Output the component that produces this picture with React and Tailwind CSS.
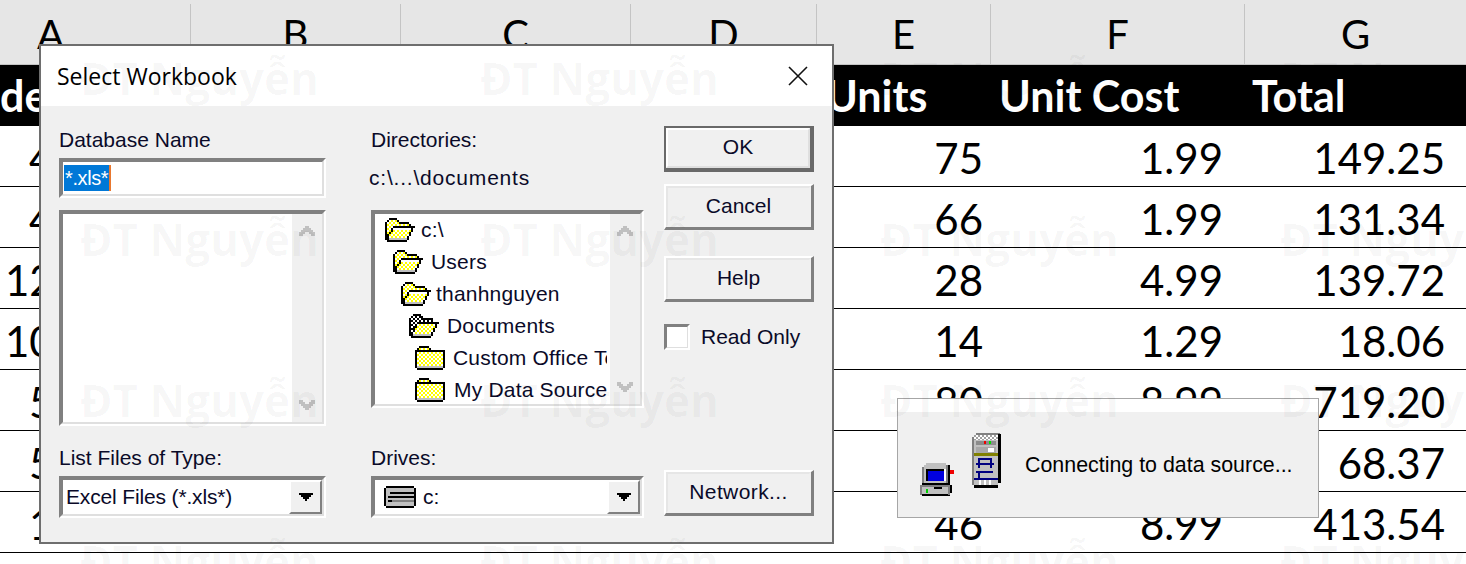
const columns = [
  { letter: "A", cls: "w-[190px] pl-[37px] text-left" },
  { letter: "B", cls: "w-[210px] border-l border-[#c4c4c4] text-center" },
  { letter: "C", cls: "w-[230px] border-l border-[#c4c4c4] text-center" },
  { letter: "D", cls: "w-[186px] border-l border-[#c4c4c4] text-center" },
  { letter: "E", cls: "w-[174px] border-l border-[#c4c4c4] text-center" },
  { letter: "F", cls: "w-[254px] border-l border-[#c4c4c4] text-center" },
  { letter: "G", cls: "w-[222px] border-l border-[#c4c4c4] text-center" },
];

const rows = [
  { a: "4", aCls: "pl-[29px]", units: "75", cost: "1.99", total: "149.25" },
  { a: "4", aCls: "pl-[29px]", units: "66", cost: "1.99", total: "131.34" },
  { a: "12", aCls: "pl-[5px]", units: "28", cost: "4.99", total: "139.72" },
  { a: "10", aCls: "pl-[5px]", units: "14", cost: "1.29", total: "18.06" },
  { a: "5", aCls: "pl-[29px]", units: "80", cost: "8.99", total: "719.20" },
  { a: "5", aCls: "pl-[29px]", units: "", cost: "", total: "68.37" },
  { a: "1", aCls: "pl-[29px]", units: "46", cost: "8.99", total: "413.54" },
];

const treeRows = [
  { name: "c:\\", icon: "open", cls: "pl-[0px]", gap: "ml-[6px]" },
  { name: "Users", icon: "open", cls: "pl-[8px]", gap: "ml-[8px]" },
  { name: "thanhnguyen", icon: "open", cls: "pl-[16px]", gap: "ml-[5px]" },
  { name: "Documents", icon: "docs", cls: "pl-[24px]", gap: "ml-[8px]" },
  { name: "Custom Office Templates", icon: "closed", cls: "pl-[32px]", gap: "ml-[8px]" },
  { name: "My Data Sources", icon: "closed", cls: "pl-[32px]", gap: "ml-[9px]" },
];

const bitmaps = {
  open: [
    "...kkkk.........",
    "..kyyyyk........",
    ".kyyyyyykkkkk...",
    ".kyyyyyyyyyyyk..",
    ".kyyykkkkkkkkkkk",
    ".kyykwwwwwwwwwk.",
    ".kyykyyyyyyyyyk.",
    ".kykyyyyyyyyyk..",
    ".kkyyyyyyyyyyk..",
    ".kkyyyyyyyyyk...",
    ".kkgggggggggk...",
    "..kkkkkkkkkk....",
  ],
  docs: [
    "...kkkk.........",
    "..kddddk........",
    ".kddddddkkkkk...",
    ".kddddddddddk...",
    ".kdddkkkkkkkkkkk",
    ".kddkyyyyyyyyyk.",
    ".kddkyyyyyyyyyk.",
    ".kdkyyyyyyyyyk..",
    ".kdkyyyyyyyyyk..",
    ".kkyyyyyyyyyk...",
    ".kkgggggggggk...",
    "..kkkkkkkkkk....",
  ],
  closed: [
    "..kkkkk........",
    ".kyyyyyk.......",
    "kkkkkkkkkkkkkkk",
    "kyyyyyyyyyyyyyk",
    "kyyyyyyyyyyyyyk",
    "kyyyyyyyyyyyyyk",
    "kyyyyyyyyyyyyyk",
    "kyyyyyyyyyyyyyk",
    "kyyyyyyyyyyyyyk",
    "kyyyyyyyyyyyyyk",
    "kgggggggggggggk",
    ".kkkkkkkkkkkkk.",
  ],
};

const solid = { k: "#000", g: "#c0c0c0", w: "#fff" };

// one bitmap cell is 2px; y and d cells are a checker with white
function cellFill(c, x, y) {
  if (c === "y" || c === "d") {
    if ((x + y) % 2 === 0) return "#fff";
    return c === "y" ? "#ffff00" : "#000";
  }
  return solid[c];
}

function Folder({ type }) {
  const map = bitmaps[type];
  const w = map[0].length;
  return (
    <svg width={w * 2} height={24} viewBox={`0 0 ${w * 2} 24`} shapeRendering="crispEdges" className="shrink-0">
      {map.map((line, y) =>
        line.split("").map((c, x) =>
          c === "." ? null : <rect key={`${x}-${y}`} x={x * 2} y={y * 2} width="2" height="2" fill={cellFill(c, x, y)} />
        )
      )}
    </svg>
  );
}

function Sunken({ className, children }) {
  return (
    <div className={`border-2 border-t-[#808080] border-l-[#808080] border-r-white border-b-white ${className}`}>
      <div className="w-full h-full border-2 border-t-[#808080] border-l-[#808080] border-r-[#dfdfdf] border-b-[#dfdfdf] bg-white overflow-hidden">
        {children}
      </div>
    </div>
  );
}

function Scrollbar() {
  return (
    <div className="w-[30px] h-full shrink-0 bg-[#f0f0f0] flex flex-col items-center justify-between py-[12px]">
      <svg width="16" height="12" viewBox="0 0 16 12" shapeRendering="crispEdges">
        <path d="M6 0h4v2h2v2h2v2h2v4h-4V8h-2V6H6v2H4v2H0V6h2V4h2V2h2z" fill="#c0c0c0" />
      </svg>
      <svg width="16" height="12" viewBox="0 0 16 12" shapeRendering="crispEdges">
        <path d="M6 12h4v-2h2V8h2V6h2V2h-4v2h-2v2H6V4H4V2H0v4h2v2h2v2h2z" fill="#c0c0c0" />
      </svg>
    </div>
  );
}

function Combo({ children }) {
  return (
    <Sunken className="h-[42px]">
      <div className="h-full flex items-center">
        <div className="flex-1 flex items-center min-w-0">{children}</div>
        <div className="w-[33px] h-full shrink-0 bg-[#f0f0f0] border-2 border-t-white border-l-white border-r-[#808080] border-b-[#808080] flex items-center justify-center">
          <svg width="14" height="8" viewBox="0 0 14 8" shapeRendering="crispEdges">
            <path d="M0 0h14v2h-2v2h-2v2H8v2H6V6H4V4H2V2H0z" fill="#000" />
          </svg>
        </div>
      </div>
    </Sunken>
  );
}

function Button({ children, isDefault, className }) {
  const border = isDefault
    ? "border-2 border-[#696969] border-b-[4px] border-r-[4px]"
    : "border-2 border-t-white border-l-white border-r-[#808080] border-b-[#808080] border-r-[3px] border-b-[3px]";
  return (
    <div className={`h-[46px] ${border} ${className}`}>
      <div
        className={`h-full flex items-center justify-center pb-[2px] ${
          isDefault ? "border-2 border-t-white border-l-white border-r-[#dfdfdf] border-b-[#dfdfdf]" : "border-2 border-t-[#e6e6e6] border-l-[#e6e6e6] border-r-[#f0f0f0] border-b-[#f0f0f0]"
        }`}
      >
        {children}
      </div>
    </div>
  );
}

function SelectWorkbook() {
  return (
    <div className="absolute left-[39px] top-[44px] w-[795px] h-[500px] border-2 border-[#6e6e6e] bg-[#f0f0f0] font-['Liberation_Sans',sans-serif] text-[21px] leading-[24px] text-[#0a0a28]">
      <div className="h-[60px] bg-white flex items-center justify-between pl-[16px] pr-[24px]">
        <span className="font-['Open_Sans',sans-serif] text-[23px] text-black">Select Workbook</span>
        <svg width="20" height="20" viewBox="0 0 20 20">
          <path d="M1 1l18 18M19 1L1 19" stroke="#111" strokeWidth="1.6" fill="none" />
        </svg>
      </div>

      <div className="flex pl-[18px]">
        {/* Database column */}
        <div className="w-[267px] pt-[22px]">
          <div>Database Name</div>
          <Sunken className="mt-[6px] h-[40px]">
            <div className="h-full flex items-center pl-[1px]">
              <span className="bg-[#0078d7] text-white text-[20px] leading-[26px] tracking-[-0.4px] h-[26px] w-[47px] pl-[1px] border-r-2 border-[#e8772e] whitespace-nowrap">*.xls*</span>
            </div>
          </Sunken>
          <Sunken className="mt-[12px] h-[216px]">
            <div className="h-full flex justify-end">
              <Scrollbar />
            </div>
          </Sunken>
          <div className="mt-[20px]">List Files of Type:</div>
          <div className="mt-[6px]">
            <Combo>
              <span className="pl-[3px] tracking-[-0.15px]">Excel Files (*.xls*)</span>
            </Combo>
          </div>
        </div>

        {/* Directories column */}
        <div className="w-[273px] ml-[45px] pt-[22px]">
          <div>Directories:</div>
          <div className="mt-[14px] -ml-[2px] tracking-[0.8px]">c:\...\documents</div>
          <Sunken className="mt-[20px] h-[198px]">
            <div className="h-full flex">
              <div className="flex-1 min-w-0 overflow-hidden pl-[8px] mr-[3px]">
                {treeRows.map((row) => (
                  <div key={row.name} className={`h-[32px] flex items-center whitespace-nowrap tracking-[0.2px] ${row.cls}`}>
                    <Folder type={row.icon} />
                    <span className={row.gap}>{row.name}</span>
                  </div>
                ))}
              </div>
              <Scrollbar />
            </div>
          </Sunken>
          <div className="mt-[38px]">Drives:</div>
          <div className="mt-[6px]">
            <Combo>
              <svg width="32" height="22" viewBox="0 0 32 22" shapeRendering="crispEdges" className="ml-[9px] shrink-0">
                <path d="M2 0h28v2h2v18h-2v2H2v-2H0V2h2z" fill="#000" />
                <rect x="2" y="2" width="28" height="18" fill="#c0c0c0" />
                <rect x="6" y="6" width="24" height="2" fill="#000" />
                <rect x="4" y="10" width="26" height="2" fill="#000" />
                <rect x="4" y="14" width="4" height="2" fill="#000" />
                <rect x="8" y="14" width="22" height="2" fill="#808080" />
              </svg>
              <span className="ml-[7px]">c:</span>
            </Combo>
          </div>
        </div>

        {/* Buttons column */}
        <div className="w-[150px] ml-[20px] pt-[20px]">
          <Button isDefault>OK</Button>
          <Button className="mt-[12px]">Cancel</Button>
          <Button className="mt-[26px]">Help</Button>
          <div className="mt-[22px] h-[26px] flex items-center">
            <div className="w-[26px] h-[26px] border-2 border-t-[#808080] border-l-[#808080] border-r-white border-b-white">
              <div className="w-full h-full bg-white border border-t-[#808080] border-l-[#808080] border-r-[#dfdfdf] border-b-[#dfdfdf]" />
            </div>
            <span className="ml-[11px]">Read Only</span>
          </div>
          <Button className="mt-[120px]"><span className="tracking-[0.4px]">Network...</span></Button>
        </div>
      </div>
    </div>
  );
}

function ComputerIcon() {
  return (
    <svg width="36" height="33" viewBox="0 0 36 33" shapeRendering="crispEdges" className="shrink-0">
      <rect x="6" y="0" width="20" height="2" fill="#c0c0c0" />
      <rect x="4" y="2" width="24" height="18" fill="#c0c0c0" />
      <rect x="2" y="4" width="2" height="16" fill="#808080" />
      <rect x="26" y="2" width="2" height="18" fill="#808080" />
      <rect x="28" y="2" width="2" height="20" fill="#000" />
      <rect x="6" y="6" width="18" height="12" fill="#000" />
      <rect x="8" y="8" width="16" height="10" fill="#0000e0" />
      <rect x="24" y="6" width="2" height="12" fill="#fff" />
      <rect x="2" y="20" width="26" height="2" fill="#000" />
      <rect x="0" y="24" width="28" height="8" fill="#c0c0c0" />
      <rect x="0" y="22" width="2" height="10" fill="#808080" />
      <rect x="2" y="22" width="26" height="2" fill="#808080" />
      <rect x="2" y="31" width="28" height="2" fill="#000" />
      <rect x="28" y="22" width="2" height="10" fill="#808080" />
      <rect x="30" y="22" width="2" height="8" fill="#000" />
      <rect x="14" y="24" width="8" height="2" fill="#000" />
      <rect x="6" y="26" width="2" height="4" fill="#00d000" />
      <rect x="30" y="7" width="4" height="4" fill="#f00000" />
    </svg>
  );
}

function ServerIcon() {
  const checker = [];
  for (let y = 2; y < 7; y += 2) {
    for (let x = 2 + (y % 4); x < 26; x += 4) {
      checker.push(<rect key={`${x}-${y}`} x={x} y={y} width="2" height="2" fill="#fff" />);
    }
  }
  return (
    <svg width="30" height="55" viewBox="0 0 30 55" shapeRendering="crispEdges" className="shrink-0">
      <rect x="4" y="0" width="24" height="2" fill="#808080" />
      <rect x="2" y="2" width="24" height="5" fill="#a0a0a0" />
      {checker}
      <rect x="0" y="7" width="26" height="45" fill="#c0c0c0" />
      <rect x="0" y="4" width="2" height="48" fill="#808080" />
      <rect x="26" y="1" width="3" height="49" fill="#000" />
      <rect x="2" y="52" width="24" height="3" fill="#000" />
      <rect x="4" y="8" width="20" height="4" fill="#8c8c8c" />
      <rect x="12" y="8" width="2" height="3" fill="#f00000" />
      <rect x="17" y="8" width="2" height="3" fill="#00e000" />
      <rect x="4" y="14" width="20" height="6" fill="#a8a8a8" />
      <rect x="16" y="15" width="6" height="4" fill="#fff" />
      <rect x="2" y="20" width="24" height="3" fill="#808000" />
      <rect x="6" y="25" width="13" height="2" fill="#000080" />
      <rect x="4" y="30" width="18" height="2" fill="#000080" />
      <rect x="6" y="25" width="2" height="10" fill="#000080" />
      <rect x="18" y="25" width="2" height="10" fill="#000080" />
      <rect x="4" y="38" width="17" height="2" fill="#000080" />
      <rect x="6" y="38" width="2" height="7" fill="#000080" />
      <rect x="2" y="45" width="24" height="2" fill="#000080" />
      <rect x="7" y="47" width="2" height="5" fill="#fff" />
      <rect x="12" y="47" width="2" height="5" fill="#fff" />
      <rect x="17" y="47" width="2" height="5" fill="#fff" />
    </svg>
  );
}

function ConnectingToast() {
  return (
    <div className="absolute left-[897px] top-[398px] w-[422px] h-[120px] border border-[#a6a6a6] bg-[#f0f0f0]">
      <div className="h-[13px] bg-white" />
      <div className="flex items-start pl-[22px] pt-[21px]">
        <div className="pt-[30px]">
          <ComputerIcon />
        </div>
        <div className="ml-[16px]">
          <ServerIcon />
        </div>
        <span className="ml-[23px] mt-[19px] font-['Liberation_Sans',sans-serif] text-[21.4px] leading-[26px] text-black whitespace-nowrap">
          Connecting to data source...
        </span>
      </div>
    </div>
  );
}

export default function App() {
  return (
    <div className="relative w-[1466px] h-[564px] overflow-hidden bg-white font-['Lato',sans-serif] text-black">
      {/* column letters */}
      <div className="flex h-[65px] bg-[#e6e6e6] border-b border-[#c4c4c4] pt-[4px]">
        {columns.map((col) => (
          <div key={col.letter} className={`text-[40px] leading-[60px] ${col.cls}`}>
            {col.letter}
          </div>
        ))}
      </div>

      {/* header row */}
      <div className="flex h-[61px] bg-black text-white font-bold text-[43px] leading-[61px] whitespace-nowrap">
        <div className="w-[826px]">de</div>
        <div className="w-[173px]">Units</div>
        <div className="w-[253px]">Unit Cost</div>
        <div>Total</div>
      </div>

      {/* data rows */}
      {rows.map((row, i) => (
        <div key={i} className="flex h-[61px] border-b border-black text-[42px] leading-[64px]">
          <div className={`w-[816px] ${row.aCls}`}>{row.a}</div>
          <div className="w-[174px] pr-[7px] text-right">{row.units}</div>
          <div className="w-[254px] pr-[21px] text-right">{row.cost}</div>
          <div className="w-[222px] pr-[21px] text-right">{row.total}</div>
        </div>
      ))}

      <SelectWorkbook />
      <ConnectingToast />

      {/* watermark */}
      <div className="absolute inset-0 pl-[80px] pt-[50px] grid grid-cols-[400px_400px_400px_400px] auto-rows-[161px] pointer-events-none font-['Open_Sans',sans-serif] font-bold text-[44px] leading-[56px] text-black/[0.035] whitespace-nowrap">
        {Array.from({ length: 16 }).map((_, i) => (
          <div key={i}>ĐT Nguyễn</div>
        ))}
      </div>
    </div>
  );
}
